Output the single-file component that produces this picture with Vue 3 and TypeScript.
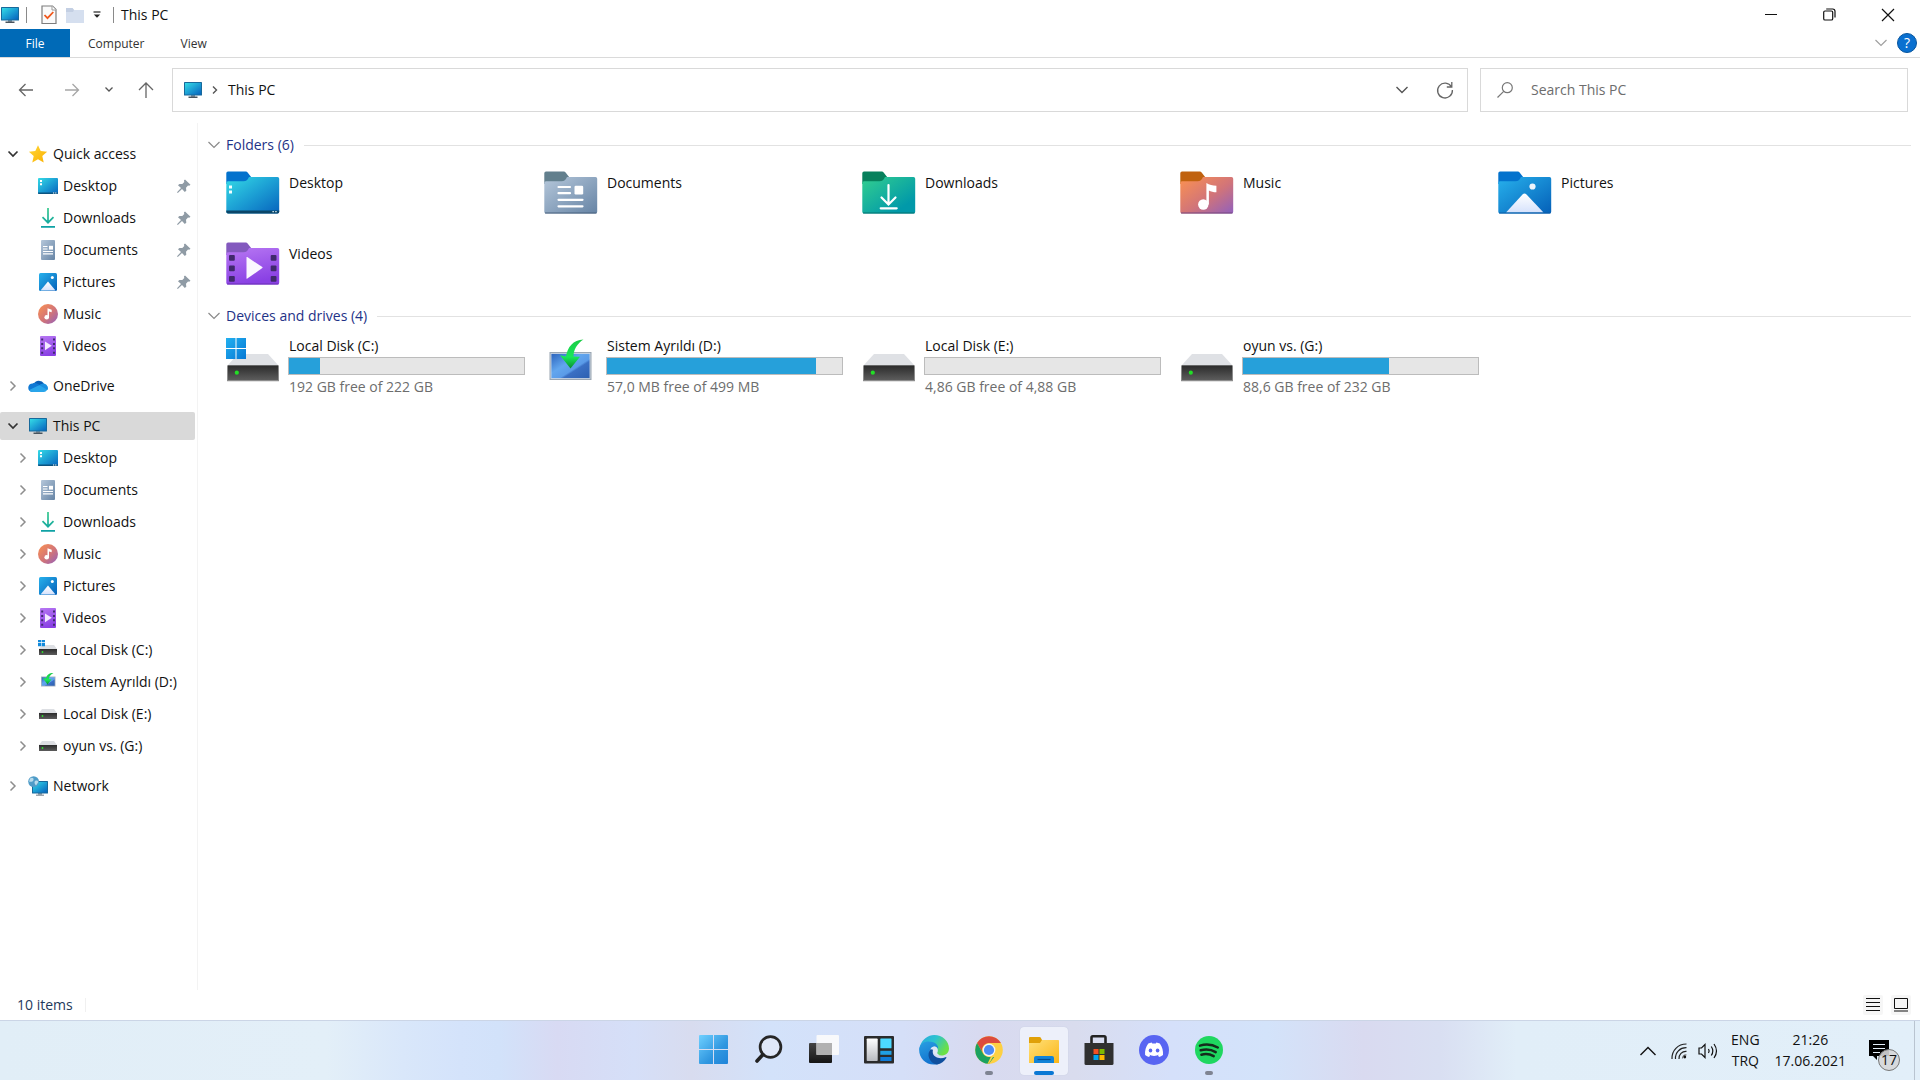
<script setup lang="ts">
import { ref } from 'vue'

interface TreeItem {
  label: string
  icon: string
  pinned?: boolean
}

interface TreeGroup {
  label: string
  icon: string
  open: boolean
  expandableItems: boolean
  selected?: boolean
  items: TreeItem[]
}

interface Drive {
  label: string
  icon: string
  used: number
  info: string
}

interface TaskbarApp {
  label: string
  icon: string
  state: 'idle' | 'running' | 'active'
}

const search = ref('')

const tree = ref<TreeGroup[]>([
  {
    label: 'Quick access',
    icon: 'star',
    open: true,
    expandableItems: false,
    items: [
      { label: 'Desktop', icon: 's-desktop', pinned: true },
      { label: 'Downloads', icon: 's-downloads', pinned: true },
      { label: 'Documents', icon: 's-documents', pinned: true },
      { label: 'Pictures', icon: 's-pictures', pinned: true },
      { label: 'Music', icon: 's-music' },
      { label: 'Videos', icon: 's-videos' },
    ],
  },
  { label: 'OneDrive', icon: 'onedrive', open: false, expandableItems: true, items: [] },
  {
    label: 'This PC',
    icon: 'monitor',
    open: true,
    expandableItems: true,
    selected: true,
    items: [
      { label: 'Desktop', icon: 's-desktop' },
      { label: 'Documents', icon: 's-documents' },
      { label: 'Downloads', icon: 's-downloads' },
      { label: 'Music', icon: 's-music' },
      { label: 'Pictures', icon: 's-pictures' },
      { label: 'Videos', icon: 's-videos' },
      { label: 'Local Disk (C:)', icon: 's-windisk' },
      { label: 'Sistem Ayrıldı (D:)', icon: 's-reserved' },
      { label: 'Local Disk (E:)', icon: 's-disk' },
      { label: 'oyun vs. (G:)', icon: 's-disk' },
    ],
  },
  { label: 'Network', icon: 'network', open: false, expandableItems: true, items: [] },
])

const folders = [
  { label: 'Desktop', icon: 'f-desktop' },
  { label: 'Documents', icon: 'f-documents' },
  { label: 'Downloads', icon: 'f-downloads' },
  { label: 'Music', icon: 'f-music' },
  { label: 'Pictures', icon: 'f-pictures' },
  { label: 'Videos', icon: 'f-videos' },
]

const drives: Drive[] = [
  { label: 'Local Disk (C:)', icon: 'd-windisk', used: 13, info: '192 GB free of 222 GB' },
  { label: 'Sistem Ayrıldı (D:)', icon: 'd-reserved', used: 89, info: '57,0 MB free of 499 MB' },
  { label: 'Local Disk (E:)', icon: 'd-disk', used: 0, info: '4,86 GB free of 4,88 GB' },
  { label: 'oyun vs. (G:)', icon: 'd-disk', used: 62, info: '88,6 GB free of 232 GB' },
]

const apps: TaskbarApp[] = [
  { label: 'Start', icon: 't-start', state: 'idle' },
  { label: 'Search', icon: 't-search', state: 'idle' },
  { label: 'Task View', icon: 't-taskview', state: 'idle' },
  { label: 'Widgets', icon: 't-widgets', state: 'idle' },
  { label: 'Microsoft Edge', icon: 't-edge', state: 'idle' },
  { label: 'Google Chrome', icon: 't-chrome', state: 'running' },
  { label: 'File Explorer', icon: 't-explorer', state: 'active' },
  { label: 'Microsoft Store', icon: 't-store', state: 'idle' },
  { label: 'Discord', icon: 't-discord', state: 'idle' },
  { label: 'Spotify', icon: 't-spotify', state: 'running' },
]
</script>

<template>
  <div class="screen">
    <!-- Shared icon sheet -->
    <svg class="sheet" width="0" height="0" aria-hidden="true">
      <defs>
        <linearGradient id="g-cyan" x1="0" y1="0" x2="1" y2="1"><stop offset="0" stop-color="#35dbe6" /><stop offset=".5" stop-color="#1c9fd4" /><stop offset="1" stop-color="#0763bd" /></linearGradient>
        <linearGradient id="g-slate" x1="0" y1="0" x2="1" y2="1"><stop offset="0" stop-color="#b5c7da" /><stop offset="1" stop-color="#6684a5" /></linearGradient>
        <linearGradient id="g-green" x1="0" y1="0" x2="1" y2="1"><stop offset="0" stop-color="#33cf8f" /><stop offset=".8" stop-color="#0199a9" /><stop offset="1" stop-color="#0199a9" /></linearGradient>
        <linearGradient id="g-arrow" x1="0" y1="0" x2="0" y2="20" gradientUnits="userSpaceOnUse"><stop offset="0" stop-color="#36c98c" /><stop offset="1" stop-color="#0c9fa6" /></linearGradient>
        <linearGradient id="g-orange" x1="0" y1="0" x2="1" y2="1"><stop offset="0" stop-color="#fc9250" /><stop offset=".55" stop-color="#d17479" /><stop offset="1" stop-color="#9160bd" /></linearGradient>
        <linearGradient id="g-blue" x1="0" y1="0" x2="1" y2="1"><stop offset="0" stop-color="#27b1ec" /><stop offset="1" stop-color="#0560b8" /></linearGradient>
        <linearGradient id="g-purple" x1="0" y1="0" x2=".3" y2="1"><stop offset="0" stop-color="#b878f3" /><stop offset="1" stop-color="#8a41e4" /></linearGradient>
        <linearGradient id="g-peak" x1="0" y1="0" x2="0" y2="1"><stop offset="0" stop-color="#fff" /><stop offset="1" stop-color="#d6e2fc" /></linearGradient>
        <linearGradient id="g-drive" x1="0" y1="0" x2="0" y2="1"><stop offset="0" stop-color="#2b2b2b" /><stop offset="1" stop-color="#5c5c5c" /></linearGradient>
        <linearGradient id="g-win" x1="0" y1="0" x2="1" y2="1"><stop offset="0" stop-color="#22b0f0" /><stop offset="1" stop-color="#0678d4" /></linearGradient>
        <linearGradient id="g-start" x1="0" y1="0" x2="29" y2="29" gradientUnits="userSpaceOnUse"><stop offset="0" stop-color="#6fd0ff" /><stop offset=".6" stop-color="#3097e0" /><stop offset="1" stop-color="#1f83d8" /></linearGradient>
        <linearGradient id="g-screen" x1="0" y1="0" x2="1" y2="1"><stop offset="0" stop-color="#2a62bc" /><stop offset=".4" stop-color="#62a6ee" /><stop offset=".6" stop-color="#5a9be8" /><stop offset=".65" stop-color="#3a70c4" /><stop offset="1" stop-color="#2c5fb0" /></linearGradient>
        <linearGradient id="g-swoosh" x1="0" y1="0" x2="0" y2="1"><stop offset="0" stop-color="#1bcb45" /><stop offset=".6" stop-color="#19e85a" /><stop offset="1" stop-color="#0a8d2e" /></linearGradient>
        <linearGradient id="g-star" x1="0" y1="0" x2="1" y2="1"><stop offset="0" stop-color="#ffd83a" /><stop offset="1" stop-color="#fbb000" /></linearGradient>
        <linearGradient id="g-yellow" x1="0" y1="0" x2="1" y2="1"><stop offset="0" stop-color="#ffe07a" /><stop offset="1" stop-color="#fbb616" /></linearGradient>
        <linearGradient id="g-dark" x1="0" y1="0" x2="0" y2="1"><stop offset="0" stop-color="#444" /><stop offset="1" stop-color="#151515" /></linearGradient>
        <linearGradient id="g-light" x1="0" y1="0" x2="0" y2="1"><stop offset="0" stop-color="#fff" /><stop offset="1" stop-color="#b9bbc0" /></linearGradient>
        <linearGradient id="g-edge1" x1="0" y1="0" x2="1" y2=".5"><stop offset="0" stop-color="#2aa7de" /><stop offset=".5" stop-color="#2cc3d0" /><stop offset="1" stop-color="#6be046" /></linearGradient>
        <linearGradient id="g-edge2" x1="0" y1="0" x2=".4" y2="1"><stop offset="0" stop-color="#2aa0e2" /><stop offset="1" stop-color="#1273cf" /></linearGradient>

        <symbol id="monitor" viewBox="0 0 20 20">
          <path d="M8 15h4v2H8z" fill="#8b98a3" /><path d="M5.5 16.5h9v1.5h-9z" fill="#48545e" />
          <rect x="1" y="2" width="18" height="13.5" rx=".6" fill="#17699b" /><rect x="2" y="3" width="16" height="11.5" fill="url(#g-cyan)" />
        </symbol>
        <symbol id="star" viewBox="0 0 20 20"><path d="M10 1.2l2.7 5.9 6.4.7-4.8 4.3 1.4 6.4L10 15.3l-5.7 3.2 1.4-6.4L.9 7.8l6.4-.7z" fill="url(#g-star)" /></symbol>
        <symbol id="onedrive" viewBox="0 0 20 20">
          <path d="M5.5 8A6 6 0 0 1 16 7.6L11 12z" fill="#0a5fb6" />
          <path d="M4.5 16A4.3 4.3 0 0 1 4.6 7.4C7 6.6 9 7.4 11 8.6L15 11 8 16z" fill="#0f78d4" />
          <path d="M15.6 7.5A4.3 4.3 0 0 1 16 16H4.5A4.4 4.4 0 0 1 1.2 14L9 10.3z" fill="#29a5ea" /><path d="M11.5 9.2c2.5-2.2 5.2-2 6.8.1A4 4 0 0 1 19.6 14z" fill="#1b8fe0" />
        </symbol>
        <symbol id="network" viewBox="0 0 20 20">
          <path d="M10 17h4v2h-4z" fill="#8b98a3" /><path d="M8 18.5h8V20H8z" fill="#9da7ae" />
          <rect x="4" y="5" width="16" height="12.5" rx=".5" fill="#17699b" /><rect x="5" y="6" width="14" height="10.5" fill="url(#g-cyan)" />
          <circle cx="5.6" cy="5.6" r="5.4" fill="#4f9cc8" /><path d="M2 2.5C4 1 6 2 5.5 4S2.500 6 1 5.500zM7 5c2-1 3 0 3.400 1L8 9.500C6.500 8 6 6 7 5z" fill="#b8dbec" />
        </symbol>

        <symbol id="s-desktop" viewBox="0 0 20 20">
          <rect y="2" width="20" height="16" rx="1" fill="url(#g-cyan)" /><path d="M0 16.500h20v.5q0 1-1 1H1q-1 0-1-1z" fill="#0c5480" />
          <path d="M2 4h2v2H2zM2 7.300h2v2H2zM15 16.500h1.200v1H15zM17.200 16.500h1.200v1h-1.200z" fill="#fff" />
        </symbol>
        <symbol id="s-downloads" viewBox="0 0 20 20">
          <path d="M10 0v14.500M4.500 9.200L10 14.700l5.500-5.500M3 18.900h14" fill="none" stroke="url(#g-arrow)" stroke-width="1.700" />
        </symbol>
        <symbol id="s-documents" viewBox="0 0 20 20">
          <rect x="3" y="0" width="14" height="20" rx="1" fill="url(#g-slate)" /><path d="M5 6.500h4.500M5 9h4.500M5 11.500h10M5 13.800h10" stroke="#fff" stroke-width="1.200" /><path d="M11 5.800h4v3.800h-4z" fill="#fff" />
        </symbol>
        <symbol id="s-pictures" viewBox="0 0 20 20">
          <rect x="1" y="1" width="18" height="18" rx="1.500" fill="url(#g-blue)" /><path d="M2.500 18.500L10 9.500l7.500 9z" fill="url(#g-peak)" /><circle cx="14.300" cy="5.400" r="1.500" fill="#fff" />
        </symbol>
        <symbol id="s-music" viewBox="0 0 20 20">
          <circle cx="10" cy="10" r="10" fill="url(#g-orange)" /><circle cx="8.700" cy="13.200" r="2.300" fill="#fff" /><path d="M9.500 4.200l4.200 1.500v2.600L11 7.400v6H9.500z" fill="#fff" />
        </symbol>
        <symbol id="s-videos" viewBox="0 0 20 20">
          <rect x="2" y="0" width="16" height="20" rx="1" fill="url(#g-purple)" /><path d="M7 5.500l6.800 4.300L7 14.200z" fill="#f3e9ff" />
          <path d="M3.200 2.500h2v2h-2zm0 4.400h2v2h-2zm0 4.400h2v2h-2zm0 4.400h2v2h-2zM15 2.500h2v2h-2zm0 4.400h2v2h-2zm0 4.400h2v2h-2zm0 4.400h2v2h-2z" fill="#412a70" />
        </symbol>
        <symbol id="s-disk" viewBox="0 0 20 20">
          <path d="M4 5h12l3 4H1z" fill="#dddfe3" /><rect x="1" y="9" width="18" height="6" fill="url(#g-drive)" /><circle cx="4.500" cy="12" r=".9" fill="#2ee02e" />
        </symbol>
        <symbol id="s-windisk" viewBox="0 0 20 20">
          <path d="M4 5h12l3 4H1z" fill="#dddfe3" /><rect x="1" y="9" width="18" height="6" fill="url(#g-drive)" /><circle cx="4.500" cy="12" r=".9" fill="#2ee02e" />
          <path d="M0-1h3.200v3.300H0zM3.800-1H7v3.300H3.800zM0 3h3.200v3.300H0zM3.800 3H7v3.300H3.800z" fill="#138adb" />
        </symbol>
        <symbol id="s-reserved" viewBox="0 0 20 20">
          <rect x="3" y="4.500" width="14.500" height="10" fill="#aab4bf" /><rect x="3.800" y="5.300" width="12.900" height="8.400" fill="url(#g-screen)" />
          <path d="M15.500 1C11 1 8.500 3 8 6.500L4.800 6 9.500 12.500 13.500 7.500l-2.700-.5C11 4.500 12.500 2.500 15.500 1z" fill="url(#g-swoosh)" />
        </symbol>

        <symbol id="body" viewBox="0 0 54 44">
          <path d="M2 10.300h15.500c3 0 4-1.300 5.500-4.300h28.500q1.700 0 1.700 1.700v33q0 1.700-1.700 1.700H2Q.3 42.400.3 40.700V12q0-1.700 1.700-1.700z" />
        </symbol>
        <symbol id="tab" viewBox="0 0 54 44">
          <path d="M2 .5h17c1.500 0 2.200.4 3 1.500l3.500 4.500L20 13H.3V2.200Q.3.500 2 .5z" />
        </symbol>
        <symbol id="f-desktop" viewBox="0 0 54 44">
          <use href="#tab" fill="#0372cd" /><use href="#body" fill="url(#g-cyan)" />
          <path d="M.3 39.500h52.900v1.200q0 1.700-1.700 1.700H2Q.3 42.400.3 40.700z" fill="#0b4669" />
          <path d="M3 14.500h3v3H3zM3 19.500h3v3H3zM46.500 40h1.300v1.300h-1.300zM49.300 40h1.300v1.300h-1.300z" fill="#f2feff" />
        </symbol>
        <symbol id="f-documents" viewBox="0 0 54 44">
          <use href="#tab" fill="#627f8d" /><use href="#body" fill="url(#g-slate)" /><path d="M1 42h51.500" stroke="#48607c" />
          <path d="M14.500 16h11.500M14.500 22.200h11.500M14.500 28.800h24M14.500 35.300h24" stroke="#fff" stroke-width="2.200" stroke-linecap="round" /><rect x="30.500" y="14.800" width="8.700" height="8.600" rx="1.200" fill="#fff" />
        </symbol>
        <symbol id="f-downloads" viewBox="0 0 54 44">
          <use href="#tab" fill="#07805c" /><use href="#body" fill="url(#g-green)" /><path d="M1 42h51.500" stroke="#04716f" />
          <path d="M26.500 14v19M19.500 26.500l7 7 7-7M18.700 37.300h16" fill="none" stroke="#fff" stroke-width="2.200" stroke-linecap="round" />
        </symbol>
        <symbol id="f-music" viewBox="0 0 54 44">
          <use href="#tab" fill="#c0620f" /><use href="#body" fill="url(#g-orange)" /><path d="M1 42h51.500" stroke="#75467d" />
          <circle cx="23.300" cy="33.500" r="5.200" fill="#fff" /><path d="M26.400 12c3 1.800 6 2.400 10 2.700v6.500c-3 0-5.500-.8-7.500-1.800v14h-2.500z" fill="#fff" />
        </symbol>
        <symbol id="f-pictures" viewBox="0 0 54 44">
          <use href="#tab" fill="#0372cd" /><use href="#body" fill="url(#g-blue)" /><path d="M8 41.500l16.500-18q2-2 4 0l17 18z" fill="url(#g-peak)" /><circle cx="34.500" cy="15.500" r="3.100" fill="#eef4fc" /><path d="M1 42h51.500" stroke="#0a5aa5" />
        </symbol>
        <symbol id="f-videos" viewBox="0 0 54 44">
          <use href="#tab" fill="#8359be" /><use href="#body" fill="url(#g-purple)" /><path d="M1 42h51.500" stroke="#6a30b4" />
          <path d="M20.500 15.500q0-.8.8-.4l15 10q.6.500 0 1l-15 10.500q-.8.500-.8-.4z" fill="#fbf7ff" />
          <g fill="#40296c"><rect x="3" y="13" width="5.800" height="5.800" rx="1" /><rect x="3" y="23.500" width="5.800" height="5.800" rx="1" /><rect x="3" y="34" width="5.800" height="5.800" rx="1" /><rect x="44.700" y="13" width="5.800" height="5.800" rx="1" /><rect x="44.700" y="23.500" width="5.800" height="5.800" rx="1" /><rect x="44.700" y="34" width="5.800" height="5.800" rx="1" /></g>
        </symbol>

        <symbol id="d-disk" viewBox="0 0 54 44">
          <path d="M12 16h30l10.500 11.500h-51z" fill="#dfe1e5" /><rect x="1" y="27.300" width="52" height="16" rx=".6" fill="#8c8c8c" /><rect x="2" y="27.500" width="50" height="14.500" fill="url(#g-drive)" /><circle cx="10.800" cy="34.700" r="2.100" fill="#22df26" />
        </symbol>
        <symbol id="d-windisk" viewBox="0 0 54 44">
          <use href="#d-disk" /><path d="M-1-1h21v22H-1z" fill="#fff" opacity=".7" />
          <path d="M0 0h9.500v10H0zM10.500 0H20v10h-9.500zM0 11h9.500v10H0zM10.500 11H20v10h-9.500z" fill="url(#g-win)" />
        </symbol>
        <symbol id="d-reserved" viewBox="0 0 54 44">
          <rect x="5.500" y="14" width="42" height="28" fill="#9aa6b2" /><rect x="7" y="15.500" width="39" height="25" fill="url(#g-screen)" stroke="#d2dbe6" stroke-width=".8" />
          <path d="M39.500 1.500C29 2 23.500 9 22 18.500l-6-1.200L26.500 30.500 36 18.800l-6.500-.3C29.500 12 33 5.500 39.500 1.500z" fill="url(#g-swoosh)" />
        </symbol>

        <symbol id="t-start" viewBox="0 0 30 30"><path d="M0 1q0-1 1-1h13v14H0zM15 0h13q1 0 1 1v13H15zM0 15h14v14H1q-1 0-1-1zM15 15h14v13q0 1-1 1H15z" fill="url(#g-start)" /></symbol>
        <symbol id="t-search" viewBox="0 0 30 30"><circle cx="16.500" cy="12" r="10.400" fill="#e6ebf7" fill-opacity=".7" stroke="#262626" stroke-width="2.700" /><path d="M9 19.500L3 26" stroke="#222" stroke-width="3.600" stroke-linecap="round" /></symbol>
        <symbol id="t-taskview" viewBox="0 0 30 30"><rect x="0" y="8" width="23" height="20" rx="1" fill="url(#g-dark)" /><rect x="7.500" y="0" width="22.500" height="20" rx="1" fill="#fbfbfb" fill-opacity=".93" /><rect x="7.500" y="8" width="15.500" height="12" fill="#b1b1b1" /></symbol>
        <symbol id="t-widgets" viewBox="0 0 30 30">
          <rect x="0" y="1" width="30" height="27.500" rx="1" fill="#2b2b2b" /><rect x="2.700" y="3.500" width="11" height="22.500" rx=".8" fill="url(#g-light)" /><rect x="16.300" y="3.500" width="11.200" height="9.800" rx=".6" fill="#4cd9ff" /><rect x="16.300" y="15.800" width="11.200" height="4" fill="#209fe3" /><rect x="16.300" y="22" width="11.200" height="4" fill="#0f7bd7" />
        </symbol>
        <symbol id="t-edge" viewBox="0 0 30 30">
          <path d="M1 11C3.500 4 9 0 15.200 0 23.500 0 30 6 30 13.500c0 4.500-3.500 7-7.500 7-3 0-5-1-4.500-2.500 1.800-2 .6-6.500-5-7.500z" fill="url(#g-edge1)" />
          <path d="M.2 13C1.500 8.500 5.500 6.500 9.500 6.500c6 0 10.500 3.500 9.500 7.500-.5-1.500-1.800-2.500-3.500-2.500-3.500 0-5 3.500-5 6.500 0 5 3.500 9.500 9 11C8 32-.9 23.500.2 13z" fill="url(#g-edge2)" />
          <path d="M11.800 14C7 19 10 28 18 29.600c4-.8 7.500-3.300 9.300-6.600.3-.7-.2-1.100-.8-.8-5.500 2.500-12.500.3-12.800-5.200 0-1.200.2-2 .6-3z" fill="#0f4f9e" /><path d="M11.800 14.200c1-2 3-3 4.800-2.500 2 .6 2.400 2.600 1.800 4.300-.8 1.700-.2 3 2 4-3.500.3-7-1.500-6.400-5.300z" fill="#dfe6f5" />
        </symbol>
        <symbol id="t-chrome" viewBox="0 0 30 30">
          <circle cx="15" cy="15" r="13.800" fill="#fdd043" /><path d="M3.050 8.100A13.800 13.800 0 0 1 26.950 8.100H15a6.900 6.900 0 0 0-6 10.300z" fill="#dc4b3e" /><path d="M3.050 8.100L9 18.450A6.900 6.900 0 0 0 15 21.900h5.200L15 28.800A13.800 13.800 0 0 1 3.050 8.100z" fill="#1ba260" /><path d="M21 18.400L15 28.800 13.500 28.700 17 21.600z" fill="#fdd043" />
          <circle cx="15" cy="15" r="6.400" fill="#f3f4f6" /><circle cx="15" cy="15" r="5.100" fill="#4a8bf5" />
        </symbol>
        <symbol id="t-explorer" viewBox="0 0 30 30">
          <path d="M0 3q0-1 1-1h9.500q.8 0 1.300.7L13 5v5H0z" fill="#e0a008" /><path d="M0 8h11l2-3h16.200q.8 0 .8.800V28H0z" fill="url(#g-yellow)" /><path d="M5 28v-5q0-2 2-2h16q2 0 2 2v5z" fill="#1283d8" /><path d="M8.500 24.500h13" stroke="#064f92" stroke-width="1.200" />
        </symbol>
        <symbol id="t-store" viewBox="0 0 30 30">
          <path d="M7.500 10V2.700q0-1.400 1.400-1.400h11.200q1.400 0 1.400 1.400V10" fill="none" stroke="#222" stroke-width="2.600" /><path d="M.5 8h29v20.500q0 1.500-1.500 1.500H2q-1.500 0-1.500-1.500z" fill="#303030" />
          <path d="M9.500 14h5v5h-5z" fill="#f25022" /><path d="M15.500 14h5v5h-5z" fill="#7fba00" /><path d="M9.500 20h5v5h-5z" fill="#00a4ef" /><path d="M15.500 20h5v5h-5z" fill="#ffb900" />
        </symbol>
        <symbol id="t-discord" viewBox="0 0 30 30">
          <circle cx="15" cy="15" r="15" fill="#5865f2" />
          <path d="M9.300 8.400a14 14 0 0 1 3.400-1l.6 1.100a14 14 0 0 1 3.500 0l.6-1.100a14 14 0 0 1 3.400 1c2.600 3.600 3.500 7.500 3.200 11.500a12 12 0 0 1-4 2l-1-1.600 1.300-.7a11 11 0 0 1-10.500 0l1.300.7-1 1.600a12 12 0 0 1-4-2c-.4-4.500.8-8.300 3.200-11.500z" fill="#fff" /><ellipse cx="11.500" cy="15.600" rx="1.800" ry="2" fill="#5865f2" /><ellipse cx="18.600" cy="15.600" rx="1.800" ry="2" fill="#5865f2" />
        </symbol>
        <symbol id="t-spotify" viewBox="0 0 30 30">
          <circle cx="15" cy="15" r="14" fill="#1fd760" /><path d="M6 10.600c6-1.700 12.500-1.100 17.800 1.900M6.700 15.300c5-1.400 10.500-.9 15 1.800M7.400 19.700c4.300-1.200 8.500-.7 12.300 1.400" fill="none" stroke="#152b1c" stroke-width="2.500" stroke-linecap="round" />
        </symbol>
      </defs>
    </svg>

    <header class="titlebar">
      <svg class="icon20" viewBox="0 0 20 20"><use href="#monitor" /></svg>
      <span class="rule"></span>
      <button class="quick" type="button" aria-label="Properties">
        <svg width="16" height="20" viewBox="0 0 16 20"><path d="M1 1h10.500L15 4.500V18.500H1z" fill="#fafafa" stroke="#7d7d7d" stroke-width="1.200" /><path d="M11 1v4h4" fill="#fff" stroke="#9a9a9a" /><path d="M3.500 10l3 3.200L12.300 7" fill="none" stroke="#f0581c" stroke-width="1.800" /></svg>
      </button>
      <button class="quick" type="button" aria-label="New folder">
        <svg width="20" height="20" viewBox="0 0 20 20"><path d="M1 3h6.500L9 5h10v13H1z" fill="#d5dfef" /><path d="M1 3h6.500L9 5 8 7H1z" fill="#c3cfe3" /></svg>
      </button>
      <button class="quick" type="button" aria-label="Customize Quick Access Toolbar">
        <svg width="8" height="8" viewBox="0 0 8 8"><path d="M.5 1h7" stroke="#222" stroke-width="1.200" /><path d="M.8 3.500h6.400L4 6.800z" fill="#222" /></svg>
      </button>
      <span class="rule near"></span>
      <h1 class="title">This PC</h1>
      <div class="window-buttons">
        <button type="button" aria-label="Minimize"><svg width="12" height="12" viewBox="0 0 12 12"><path d="M0 5.500h12" stroke="#111" /></svg></button>
        <button type="button" aria-label="Restore"><svg width="13" height="13" viewBox="0 0 13 13" fill="none" stroke="#111" stroke-width="1.200"><rect x=".7" y="3" width="9" height="9" rx="1.300" /><path d="M3.200 1h6.500q2.300 0 2.300 2.300V9.500" /></svg></button>
        <button type="button" aria-label="Close"><svg width="12" height="12" viewBox="0 0 12 12"><path d="M0 0l12 12M12 0L0 12" stroke="#111" stroke-width="1.200" /></svg></button>
      </div>
    </header>

    <nav class="ribbon">
      <button class="file" type="button">File</button>
      <button class="ribbon-tab" type="button">Computer</button>
      <button class="ribbon-tab" type="button">View</button>
      <button class="expand" type="button" aria-label="Expand the Ribbon"><svg width="12" height="8" viewBox="0 0 12 8"><path d="M.5 1L6 6.500 11.500 1" fill="none" stroke="#a0a0a0" stroke-width="1.200" /></svg></button>
      <button class="help" type="button" aria-label="Help">?</button>
    </nav>

    <div class="address-row">
      <div class="nav-buttons">
        <button type="button" aria-label="Back"><svg width="16" height="16" viewBox="0 0 16 16" fill="none" stroke="#666" stroke-width="1.300"><path d="M15 8H1.500M7.500 2L1.500 8l6 6" /></svg></button>
        <button type="button" aria-label="Forward"><svg width="16" height="16" viewBox="0 0 16 16" fill="none" stroke="#a6a6a6" stroke-width="1.300"><path d="M1 8h13.500M8.500 2l6 6-6 6" /></svg></button>
        <button class="slim" type="button" aria-label="Recent locations"><svg width="8" height="8" viewBox="0 0 8 8" fill="none" stroke="#555" stroke-width="1.300"><path d="M.5 1.500L4 5l3.500-3.500" /></svg></button>
        <button type="button" aria-label="Up"><svg width="16" height="16" viewBox="0 0 16 16" fill="none" stroke="#666" stroke-width="1.300"><path d="M8 16V1M1 8l7-7 7 7" /></svg></button>
      </div>
      <div class="address">
        <svg class="icon20" viewBox="0 0 20 20"><use href="#monitor" /></svg>
        <svg class="crumb" width="6" height="8" viewBox="0 0 6 8"><path d="M1 .5L4.500 4 1 7.500" fill="none" stroke="#555" stroke-width="1.400" /></svg>
        <a class="location" href="#">This PC</a>
        <button type="button" aria-label="Previous locations"><svg width="12" height="8" viewBox="0 0 12 8"><path d="M.5 1L6 6.500 11.500 1" fill="none" stroke="#555" stroke-width="1.400" /></svg></button>
        <button type="button" aria-label="Refresh"><svg width="18" height="18" viewBox="0 0 18 18" fill="none" stroke="#666" stroke-width="1.300"><path d="M15.500 6A7.400 7.400 0 1 0 16.400 9M15.800 1v5h-5" /></svg></button>
      </div>
      <label class="search">
        <svg width="16" height="16" viewBox="0 0 16 16" fill="none" stroke="#777" stroke-width="1.200"><circle cx="10.300" cy="5.700" r="5" /><path d="M6.700 9.300L.5 15.500" /></svg>
        <input v-model="search" type="text" placeholder="Search This PC" aria-label="Search This PC" />
      </label>
    </div>

    <div class="body">
      <aside class="sidebar">
        <ul v-for="group in tree" :key="group.label" class="group">
          <li class="row" :class="{ selected: group.selected }">
            <button class="toggle" type="button" :aria-label="'Toggle ' + group.label" @click="group.open = !group.open">
              <svg v-if="group.open" width="10" height="8" viewBox="0 0 10 8"><path d="M.5 1.500L5 6l4.500-4.500" fill="none" stroke="#333" stroke-width="1.700" /></svg>
              <svg v-else width="8" height="10" viewBox="0 0 8 10"><path d="M1.500 .5L6 5 1.500 9.500" fill="none" stroke="#8e8e8e" stroke-width="1.500" /></svg>
            </button>
            <a href="#"><svg class="icon20" viewBox="0 0 20 20"><use :href="'#' + group.icon" /></svg>{{ group.label }}</a>
          </li>
          <template v-if="group.open">
            <li v-for="item in group.items" :key="item.label" class="row child">
              <button v-if="group.expandableItems" class="toggle" type="button" :aria-label="'Expand ' + item.label">
                <svg width="8" height="10" viewBox="0 0 8 10"><path d="M1.500 .5L6 5 1.500 9.500" fill="none" stroke="#8e8e8e" stroke-width="1.500" /></svg>
              </button>
              <span v-else class="toggle"></span>
              <a href="#"><svg class="icon20" viewBox="0 0 20 20"><use :href="'#' + item.icon" /></svg>{{ item.label }}</a>
              <svg v-if="item.pinned" class="pin" width="14" height="14" viewBox="0 0 14 14"><path d="M8 .5l5.500 5.300-1.300 1-1.200-.2-2 2.200.3 2.900-1.500 1.300L5 10.100.8 14l-.8-.7 4-4.200L1 6.200l1.400-1.300 2.900.2 2-2-.4-1.500z" fill="#8f9ba5" /></svg>
            </li>
          </template>
        </ul>
      </aside>

      <main class="content">
        <section>
          <h2 class="heading"><svg width="12" height="8" viewBox="0 0 12 8"><path d="M.5 1L6 6.500 11.500 1" fill="none" stroke="#8a8a8a" stroke-width="1.200" /></svg>Folders (6)</h2>
          <div class="grid folders">
            <a v-for="folder in folders" :key="folder.label" class="tile" href="#">
              <svg class="big" viewBox="0 0 54 44"><use :href="'#' + folder.icon" /></svg>
              <span class="name">{{ folder.label }}</span>
            </a>
          </div>
        </section>
        <section>
          <h2 class="heading"><svg width="12" height="8" viewBox="0 0 12 8"><path d="M.5 1L6 6.500 11.500 1" fill="none" stroke="#8a8a8a" stroke-width="1.200" /></svg>Devices and drives (4)</h2>
          <div class="grid drives">
            <a v-for="drive in drives" :key="drive.label" class="tile" href="#">
              <svg class="big" viewBox="0 0 54 44"><use :href="'#' + drive.icon" /></svg>
              <span class="drive">
                <span class="label">{{ drive.label }}</span>
                <span class="bar" role="progressbar" :aria-valuenow="drive.used" :aria-label="drive.label"><span class="fill" :style="{ width: drive.used + '%' }"></span></span>
                <span class="info">{{ drive.info }}</span>
              </span>
            </a>
          </div>
        </section>
      </main>
    </div>

    <footer class="status">
      <span class="count">10 items</span>
      <div class="views">
        <button type="button" aria-label="Details view"><svg width="14" height="14" viewBox="0 0 14 14"><path d="M0 .5h14M0 4.500h14M0 8.500h14M0 12.500h14" stroke="#111" /></svg></button>
        <button type="button" aria-label="Large icons view"><svg width="14" height="14" viewBox="0 0 14 14"><path d="M.5.500h13v10H.5zM0 13h14" fill="none" stroke="#111" /></svg></button>
      </div>
    </footer>

    <div class="taskbar">
      <div class="side"></div>
      <div class="apps">
        <button v-for="app in apps" :key="app.label" class="app" :class="app.state" type="button" :aria-label="app.label">
          <svg class="app-icon" viewBox="0 0 30 30"><use :href="'#' + app.icon" /></svg>
        </button>
      </div>
      <div class="side tray">
        <button type="button" aria-label="Show hidden icons"><svg width="16" height="10" viewBox="0 0 16 10"><path d="M.5 9L8 1.500 15.500 9" fill="none" stroke="#111" stroke-width="1.400" /></svg></button>
        <button type="button" class="wifi" aria-label="Network"><svg width="16" height="16" viewBox="0 0 16 16" fill="none" stroke="#222" stroke-width="1.200"><path d="M1 16C.5 7.500 7 1 15.500 1M4.500 16C4 9.500 9 4.500 15.500 4.700M8 16c-.3-4.500 3-8 7.500-7.700" /><path d="M11.500 15.500c-.2-2 1.500-3.800 4-3.500" stroke="#777" /><circle cx="13.800" cy="14" r="1.400" fill="#111" stroke="none" /></svg></button>
        <button type="button" class="volume" aria-label="Volume"><svg width="21" height="18" viewBox="0 0 21 18" fill="none" stroke="#111" stroke-width="1.200"><path d="M1 6h2.500L7 2.500v13L3.500 12H1z" /><path d="M10.500 7q1.300 2 0 4M13.300 4.500q3 4.500 0 9M16 2q5 7 0 14" /></svg></button>
        <button type="button" class="lang"><span>ENG</span><span>TRQ</span></button>
        <button type="button" class="clock"><span>21:26</span><span>17.06.2021</span></button>
        <button type="button" class="notify" aria-label="Notifications">
          <svg width="20" height="20" viewBox="0 0 20 20"><path d="M0 0h20v16H8v4l-4-4H0z" fill="#000" /><path d="M4 4.500h12M4 8.500h12M4 12.500h7" stroke="#e4eef8" /></svg>
          <span class="badge">17</span>
        </button>
      </div>
    </div>
  </div>
</template>

<style>
body {
  margin: 0;
}
</style>

<style scoped>
.screen {
  display: flex;
  flex-direction: column;
  min-height: 100vh;
  background: #fff;
  color: #111;
  font-family: "Open Sans", "Noto Sans", sans-serif;
  font-size: 14px;
  line-height: 20px;
}

.sheet {
  position: absolute;
}

svg {
  display: block;
  flex: none;
  overflow: visible;
}

button {
  display: flex;
  align-items: center;
  justify-content: center;
  margin: 0;
  padding: 0;
  border: 0;
  background: none;
  color: inherit;
  font: inherit;
}

a {
  color: inherit;
  text-decoration: none;
}

.icon20 {
  width: 20px;
  height: 20px;
}

/* Title bar */
.titlebar {
  display: flex;
  align-items: center;
  height: 29px;
}

.rule {
  width: 1px;
  height: 16px;
  margin: 0 14px 0 6px;
  background: #8a8a8a;
}

.rule.near {
  margin: 0 7px 0 12px;
}

.quick {
  margin-right: 8px;
}

.quick + .rule {
  margin-left: 4px;
}

.title {
  flex: 1;
  margin: 0;
  font-size: 14px;
  font-weight: 400;
}

.window-buttons {
  display: flex;
  gap: 46px;
  margin-right: 26px;
}

/* Ribbon */
.ribbon {
  display: flex;
  height: 28px;
  border-bottom: 1px solid #dadada;
  color: #333;
  font-size: 12px;
}

.file {
  width: 70px;
  padding-top: 2px;
  background: #006ab7;
  color: #fff;
}

.ribbon-tab {
  padding: 2px 18px 0;
}

.expand {
  margin-left: auto;
}

.help {
  align-self: center;
  width: 20px;
  height: 20px;
  margin: 0 3px 0 10px;
  border-radius: 50%;
  border: 1px solid #07559e;
  background: #0a70d0;
  color: #fff;
  font-size: 14px;
}

/* Address row */
.address-row {
  display: flex;
  padding: 10px 12px 11px 0;
}

.nav-buttons {
  display: flex;
  width: 172px;
}

.nav-buttons button {
  width: 46px;
}

.nav-buttons button:first-child {
  margin-left: 3px;
}

.nav-buttons .slim {
  width: 28px;
}

.address,
.search {
  display: flex;
  align-items: center;
  box-sizing: border-box;
  height: 44px;
  border: 1px solid #d9d9d9;
}

.address {
  flex: 1;
  padding: 0 1px 0 10px;
}

.crumb {
  margin: 0 10px 0 9px;
}

.location {
  flex: 1;
}

.address button {
  width: 43px;
  height: 40px;
}

.search {
  flex: 0 1 428px;
  margin-left: 12px;
  padding: 0 16px;
  gap: 18px;
}

.search input {
  flex: 1;
  min-width: 0;
  padding: 0;
  border: 0;
  outline: 0;
  background: none;
  font: inherit;
}

.search input::placeholder {
  color: #6d6d6d;
  opacity: 1;
}

/* Navigation pane */
.body {
  display: flex;
  flex: 1;
}

.sidebar {
  flex: none;
  width: 197px;
  padding-top: 15px;
  border-right: 1px solid #f3f3f3;
}

.group {
  margin: 0 2px 10px 0;
  padding: 2px 0 0;
  list-style: none;
}

.row {
  display: flex;
  align-items: center;
  height: 28px;
  margin: 0 0 4px;
  border-radius: 2px;
}

.row:last-child {
  margin-bottom: 0;
}

.row.selected {
  background: #d9d9d9;
}

.row a {
  display: flex;
  align-items: center;
  gap: 5px;
  white-space: nowrap;
}

.toggle {
  width: 28px;
  height: 28px;
  padding-right: 3px;
  box-sizing: border-box;
}

.child .toggle {
  width: 38px;
  padding: 0 0 0 8px;
}

.pin {
  margin: 0 4px 0 auto;
}

/* Folder contents */
.content {
  flex: 1;
  min-width: 0;
  padding: 12px 9px 0 10px;
}

.heading {
  display: flex;
  align-items: center;
  gap: 6px;
  margin: 0;
  color: #1e3287;
  font-size: 14px;
  font-weight: 400;
}

.heading::after {
  content: "";
  flex: 1;
  height: 1px;
  margin-left: 4px;
  background: #e2e2e2;
}

.grid {
  display: grid;
  grid-template-columns: repeat(auto-fill, 318px);
  padding-left: 18px;
}

.folders {
  row-gap: 27px;
  padding-top: 16px;
  padding-bottom: 20px;
}

.drives {
  padding-top: 10px;
}

.tile {
  display: flex;
  align-items: flex-start;
  gap: 9px;
}

.big {
  width: 54px;
  height: 44px;
}

.name {
  margin-top: 2px;
}

.drives .big {
  margin-top: 2px;
}

.drive {
  display: flex;
  flex-direction: column;
  width: 236px;
}

.label {
  height: 21px;
}

.bar {
  display: flex;
  box-sizing: border-box;
  height: 18px;
  margin-left: -1px;
  border: 1px solid #bcbcbc;
  background: #e6e6e6;
}

.fill {
  background: #26a0da;
}

.info {
  margin-top: 2px;
  color: #6d6d6d;
}

/* Status bar */
.status {
  display: flex;
  align-items: center;
  justify-content: space-between;
  height: 30px;
  padding: 0 9px 0 17px;
  color: #1e395b;
}

.count {
  padding-right: 12px;
  border-right: 1px solid #f0f0f0;
  line-height: 14px;
}

.views {
  display: flex;
  gap: 8px;
}

.views button {
  width: 20px;
  height: 20px;
  border-radius: 2px;
  background: #f6f6f6;
}

/* Taskbar */
.taskbar {
  display: flex;
  box-sizing: border-box;
  height: 60px;
  border-top: 1px solid #cbd5e6;
  background: linear-gradient(90deg, #e1eef7 0%, #e3eff8 17%, #d9e7fa 21%, #d4e3fb 24%, #d2e2fa 26%, #d8daf3 29%, #d5dff8 33%, #d8dcef 36%, #d3e2fa 40%, #d5dff8 47%, #d8daf0 51%, #d9dcee 56%, #d5e0fa 61%, #d3e3fa 66%, #d9daf0 71%, #d9dff2 75%, #e1eef8 79%, #e2eff9 100%);
}

.side {
  flex: 1;
}

.apps {
  display: flex;
  align-items: center;
  gap: 7px;
  margin-left: 8px;
}

.app {
  position: relative;
  width: 48px;
  height: 48px;
  border-radius: 4px;
}

.app.active {
  background: #edf0fa;
  box-shadow: 0 0 1px #b9c0d2;
}

.app-icon {
  width: 30px;
  height: 30px;
  margin-bottom: 2px;
}

.app.running::after,
.app.active::after {
  content: "";
  position: absolute;
  bottom: 0;
  left: 20px;
  width: 8px;
  height: 4px;
  border-radius: 2px;
  background: #7f8492;
}

.app.active::after {
  left: 14px;
  width: 20px;
  background: #0a78d4;
}

.tray {
  display: flex;
  align-items: center;
  justify-content: flex-end;
  margin-right: 5px;
  border-right: 1px solid #b9c4d0;
}

.wifi {
  margin-left: 15px;
}

.volume {
  margin-left: 11px;
}

.lang,
.clock {
  flex-direction: column;
  margin-left: 12px;
  padding-bottom: 2px;
  line-height: 21px;
}

.clock {
  margin-left: 15px;
}

.notify {
  position: relative;
  margin: 0 25px 2px 23px;
}

.badge {
  position: absolute;
  top: 9px;
  left: 9px;
  box-sizing: border-box;
  width: 22px;
  height: 22px;
  border: 1px solid #777;
  border-radius: 50%;
  background: rgb(214 214 216 / 90%);
  font-size: 14px;
  line-height: 20px;
}
</style>
